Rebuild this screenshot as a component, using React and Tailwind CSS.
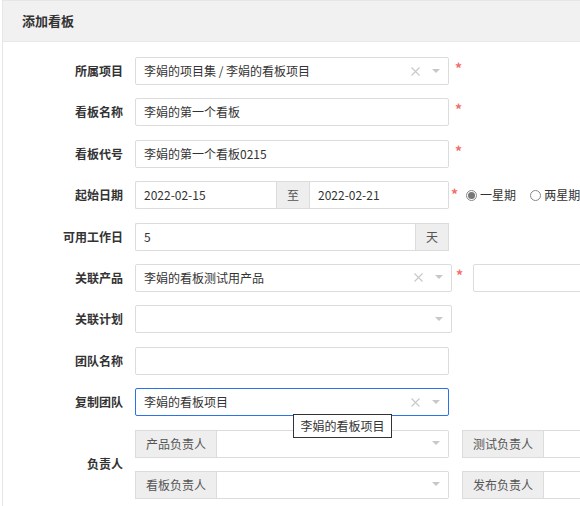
import React from "react";

const F = { fontFamily: '"Noto Sans CJK SC", "Noto Sans", sans-serif' };

function Star({ className = "" }) {
  return <span className={`text-[#f56c6c] text-[14px] font-bold leading-none ${className}`}>*</span>;
}

function Arrow() {
  return (
    <svg width="8" height="5" viewBox="0 0 8 5" className="shrink-0">
      <path d="M0 0 L8 0 L4 4 Z" fill="#c8c8c8" />
    </svg>
  );
}

function Clear() {
  return (
    <svg width="9" height="9" viewBox="0 0 9 9" className="shrink-0">
      <path d="M0.5 0.5 L8.5 8.5 M8.5 0.5 L0.5 8.5" stroke="#c8c8c8" strokeWidth="1.1" />
    </svg>
  );
}

function Select({ value, clear, w, focus, extra = "" }) {
  return (
    <div
      className={`h-[28px] ${w} flex items-center border ${focus ? "border-[#2a72e5]" : "border-[#dcdcdc]"} bg-white pl-[8px] pr-[8px] rounded-[2px] ${extra}`}
    >
      <span className="flex-1 text-[12px] text-[#333] truncate">{value}</span>
      {clear && <span className="mr-[12px] flex items-center"><Clear /></span>}
      <Arrow />
    </div>
  );
}

function Input({ value, w, extra = "" }) {
  return (
    <div className={`h-[28px] ${w} flex items-center border border-[#dcdcdc] bg-white pl-[8px] rounded-[2px] ${extra}`}>
      <span className="text-[12px] text-[#333]">{value}</span>
    </div>
  );
}

function Addon({ children, w }) {
  return (
    <div className={`h-[28px] ${w} shrink-0 flex items-center justify-center border border-[#dcdcdc] bg-[#eeeeee] text-[12px] text-[#555]`}>
      {children}
    </div>
  );
}

function Row({ label, children, mb = "mb-[13.4px]" }) {
  return (
    <div className={`flex items-center h-[28px] ${mb}`}>
      <div className="w-[120px] shrink-0 text-right text-[12px] font-semibold text-[#333]">{label}</div>
      <div className="ml-[12px] flex items-center">{children}</div>
    </div>
  );
}

export default function App() {
  return (
    <div className="w-[580px] h-[506px] overflow-hidden bg-white pl-[2px]" style={F}>
      <div className="w-[700px] h-[520px] border-l border-t border-[#e6e6e6]">
        <div className="h-[41px] bg-[#f1f1f1] border-b border-[#e8e8e8] flex items-center pl-[19px]">
          <span className="text-[13px] font-bold text-[#333]">添加看板</span>
        </div>
        <div className="pt-[15px]">
          <Row label="所属项目">
            <Select w="w-[314px]" value="李娟的项目集 / 李娟的看板项目" clear />
            <Star className="ml-[6px] -mt-[6px]" />
          </Row>
          <Row label="看板名称">
            <Input w="w-[314px]" value="李娟的第一个看板" />
            <Star className="ml-[6px] -mt-[6px]" />
          </Row>
          <Row label="看板代号">
            <Input w="w-[314px]" value="李娟的第一个看板0215" />
            <Star className="ml-[6px] -mt-[6px]" />
          </Row>
          <Row label="起始日期">
            <div className="flex">
              <Input w="w-[141px]" value="2022-02-15" extra="rounded-r-none border-r-0" />
              <Addon w="w-[34px]">至</Addon>
              <Input w="w-[139px]" value="2022-02-21" extra="rounded-l-none border-l-0" />
            </div>
            <Star className="ml-[2px] -mt-[2px] text-[12px]" />
            <span className="ml-[8px] w-[11px] h-[11px] rounded-full border border-[#888] flex items-center justify-center">
              <span className="w-[7px] h-[7px] rounded-full bg-[#777]" />
            </span>
            <span className="ml-[3px] text-[12px] text-[#333] whitespace-nowrap">一星期</span>
            <span className="ml-[14px] w-[11px] h-[11px] rounded-full border border-[#888]" />
            <span className="ml-[3px] text-[12px] text-[#333] whitespace-nowrap">两星期</span>
          </Row>
          <Row label="可用工作日">
            <div className="flex">
              <Input w="w-[280px]" value="5" extra="rounded-r-none border-r-0" />
              <Addon w="w-[34px]">天</Addon>
            </div>
          </Row>
          <Row label="关联产品">
            <Select w="w-[317px]" value="李娟的看板测试用产品" clear />
            <Star className="ml-[4px] -mt-[6px]" />
            <div className="ml-[10px] h-[28px] w-[200px] border border-[#dcdcdc] rounded-[2px]" />
          </Row>
          <Row label="关联计划">
            <Select w="w-[317px]" value="" />
          </Row>
          <Row label="团队名称">
            <Input w="w-[314px]" value="" />
          </Row>
          <Row label="复制团队">
            <div className="relative">
              <Select w="w-[314px]" value="李娟的看板项目" clear focus />
              <div className="absolute left-[158px] top-[26px] w-[99px] h-[24px] border border-[#333] bg-white flex items-center justify-center text-[12px] text-[#333] z-10 whitespace-nowrap">
                李娟的看板项目
              </div>
            </div>
          </Row>
          <div className="flex items-center">
            <div className="w-[120px] shrink-0 text-right text-[12px] font-semibold text-[#333]">负责人</div>
            <div className="ml-[12px] flex flex-col gap-[13.4px]">
              <div className="flex items-center">
                <Addon w="w-[82px]">产品负责人</Addon>
                <Select w="w-[232px]" value="" extra="border-l-0 rounded-l-none" />
                <div className="ml-[13px] flex">
                  <Addon w="w-[82px]">测试负责人</Addon>
                  <div className="h-[28px] w-[200px] border border-l-0 border-[#dcdcdc]" />
                </div>
              </div>
              <div className="flex items-center">
                <Addon w="w-[82px]">看板负责人</Addon>
                <Select w="w-[232px]" value="" extra="border-l-0 rounded-l-none" />
                <div className="ml-[13px] flex">
                  <Addon w="w-[82px]">发布负责人</Addon>
                  <div className="h-[28px] w-[200px] border border-l-0 border-[#dcdcdc]" />
                </div>
              </div>
            </div>
          </div>
        </div>
      </div>
    </div>
  );
}
